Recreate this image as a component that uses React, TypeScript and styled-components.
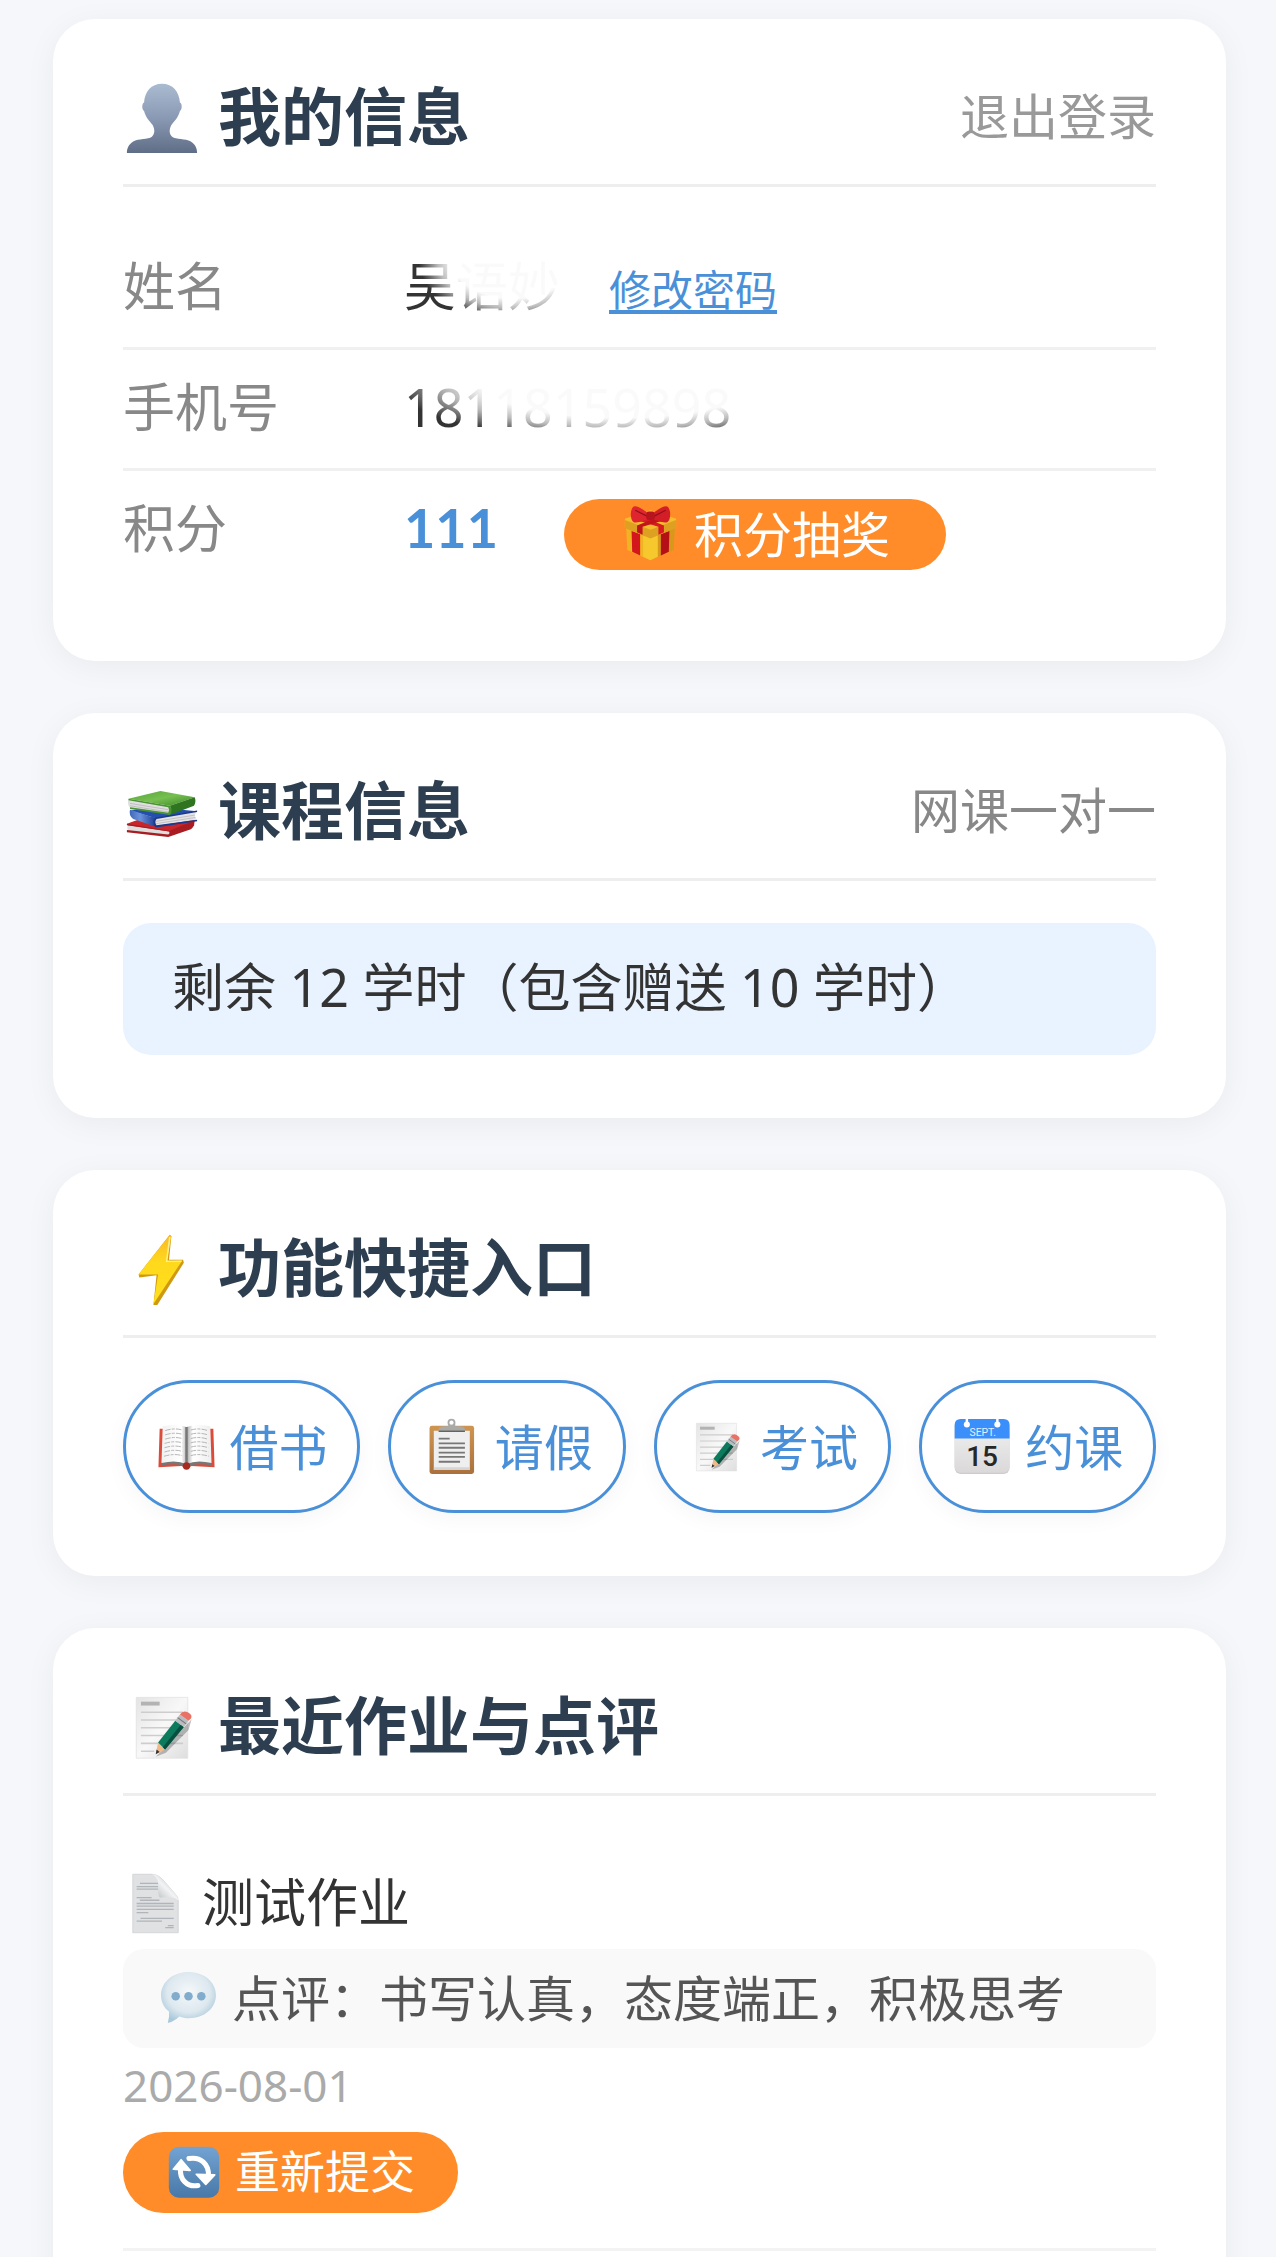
import { ReactNode } from "react";
import styled, { createGlobalStyle } from "styled-components";

const GlobalStyle = createGlobalStyle`
  * {
    box-sizing: border-box;
  }
  body {
    margin: 0;
    background: #f5f7fb;
    color: #333;
    font-family: "Noto Sans", "Noto Sans CJK SC", sans-serif;
    font-size: 52px;
  }
  h2, h3, p, dl, dt, dd, ul {
    margin: 0;
    padding: 0;
    font-weight: normal;
  }
  button {
    font-family: inherit;
    cursor: pointer;
  }
`;

const Page = styled.main`
  display: flex;
  flex-direction: column;
  gap: 52px;
  padding: 19px 50px 52px 53px;
`;

const Card = styled.section`
  padding: 60px 70px 63px;
  background: white;
  border-radius: 42px;
  box-shadow: 0 6px 32px rgba(0, 0, 0, 0.05);
`;

const CardHeader = styled.header`
  display: flex;
  justify-content: space-between;
  align-items: center;
  height: 108px;
  padding-bottom: 32px;
  margin-bottom: 42px;
  border-bottom: 3px solid #eee;
`;

const CardTitle = styled.h2`
  display: flex;
  align-items: center;
  gap: 17px;
  color: #2c3e50;
  font-size: 63px;
  font-weight: bold;
  line-height: 72px;
  svg {
    margin-top: 5px;
  }
`;

const LogoutButton = styled.button`
  padding: 0;
  border: none;
  background: none;
  color: #999;
  font-size: 49px;
  line-height: 72px;
`;

const CourseType = styled.span`
  color: #888;
  font-size: 49px;
  line-height: 72px;
`;

const InfoRow = styled.div`
  display: flex;
  align-items: baseline;
  height: 121px;
  padding-top: 21px;
  line-height: 72px;
  border-bottom: 3px solid #f0f0f0;
  &:last-child {
    height: 127px;
    border-bottom: none;
  }
`;

const InfoLabel = styled.dt`
  width: 281px;
  color: #888;
`;

const InfoValue = styled.dd`
  display: flex;
  align-items: baseline;
`;

const FadedText = styled.span<{ $fade: string }>`
  color: transparent;
  background: ${(props) => props.$fade};
  background-clip: text;
  -webkit-background-clip: text;
`;

const PasswordLink = styled.a`
  margin-left: 49px;
  color: #4a90d9;
  font-size: 42px;
  line-height: 48px;
  text-decoration: underline;
  text-decoration-thickness: 4px;
  text-underline-offset: 4px;
  text-decoration-skip-ink: none;
`;

const Points = styled.strong`
  color: #4a90d9;
  font-family: Lato, sans-serif;
  font-size: 54px;
`;

const OrangeButton = styled.button<{ $size: "flat" | "tall" }>`
  display: flex;
  align-items: center;
  align-self: flex-start;
  gap: 13px;
  height: ${(props) => (props.$size === "flat" ? 71 : 81)}px;
  margin: ${(props) => (props.$size === "flat" ? "7px 0 0 66px" : "0")};
  padding: 0 ${(props) => (props.$size === "flat" ? 56 : 43)}px 2px;
  border: none;
  border-radius: 42px;
  background: #ff8c28;
  color: white;
  font-size: ${(props) => (props.$size === "flat" ? 49 : 45)}px;
  line-height: 68px;
`;

const HoursBox = styled.p`
  padding: 28px 49px 32px;
  border-radius: 28px;
  background: #e8f3ff;
  line-height: 72px;
`;

const QuickGrid = styled.nav`
  display: grid;
  grid-template-columns: repeat(4, 1fr);
  gap: 28px;
`;

const QuickButton = styled.button`
  display: flex;
  justify-content: center;
  align-items: center;
  gap: 13px;
  height: 133px;
  padding: 0;
  border: 3px solid #4a90d9;
  border-radius: 70px;
  background: white;
  box-shadow: 0 6px 22px rgba(0, 0, 0, 0.04);
  color: #4a90d9;
  font-size: 49px;
  line-height: 72px;
  white-space: nowrap;
`;

const HomeworkItem = styled.li`
  display: flex;
  flex-direction: column;
  align-items: flex-start;
  padding: 28px 0 35px;
  border-bottom: 3px solid #f3f3f3;
`;

const HomeworkTitle = styled.h3`
  display: flex;
  align-items: center;
  gap: 14px;
  padding-bottom: 11px;
  font-size: 52px;
  line-height: 72px;
  svg {
    margin-top: 3px;
  }
`;

const Comment = styled.p`
  display: flex;
  align-items: center;
  gap: 13px;
  align-self: stretch;
  height: 99px;
  padding: 0 35px 2px;
  border-radius: 21px;
  background: #f9f9f9;
  color: #555;
  font-size: 49px;
  line-height: 72px;
`;

const HomeworkDate = styled.time`
  margin: 6px 0 15px;
  color: #aaa;
  font-size: 44px;
  line-height: 63px;
`;

const Svg = styled.svg`
  display: block;
  flex-shrink: 0;
`;

interface IIcon {
  size: number;
}

function Icon({ size, children }: IIcon & { children: ReactNode }) {
  return (
    <Svg width={size} height={size} viewBox="0 0 100 100" aria-hidden="true">
      {children}
    </Svg>
  );
}

function PersonIcon({ size }: IIcon) {
  return (
    <Icon size={size}>
      <defs>
        <linearGradient id="person" x1="0" y1="0" x2="0" y2="1">
          <stop offset="0" stopColor="#a9bbd1" />
          <stop offset="0.5" stopColor="#8a99b3" />
          <stop offset="1" stopColor="#5f6d86" />
        </linearGradient>
      </defs>
      <path
        d="M50 6C36 6 28 16 27 30C24 31 24 39 27 41C29 49 34 54 38 59C41 65 41 70 37 74C32 78 20 76 13 80C7 84 5 89 5 95H95C95 89 93 84 87 80C80 76 68 78 63 74C59 70 59 65 62 59C66 54 71 49 73 41C76 39 76 31 73 30C72 16 64 6 50 6Z"
        fill="url(#person)"
      />
    </Icon>
  );
}

function BooksIcon({ size }: IIcon) {
  return (
    <Icon size={size}>
      <defs>
        <linearGradient id="greenBook" x1="0" y1="0" x2="1" y2="1">
          <stop offset="0" stopColor="#58a53a" />
          <stop offset="0.5" stopColor="#76bf50" />
          <stop offset="1" stopColor="#3a8626" />
        </linearGradient>
        <linearGradient id="blueBook" x1="0" y1="0" x2="1" y2="0">
          <stop offset="0" stopColor="#4067b8" />
          <stop offset="0.4" stopColor="#6b93dc" />
          <stop offset="1" stopColor="#1c3c94" />
        </linearGradient>
      </defs>
      <path d="M5 65L30 56L92 60L91 68L60 78L8 70Z" fill="#c8262b" />
      <path d="M7 67L60 75L59 81L7 74Q4 70 7 67Z" fill="#dedede" />
      <path d="M5 65L60 74L91 61Q92 69 87 72L58 82L5 76L5 73L58 79Q61 77 59 75L5 67Z" fill="#a81c22" />
      <path d="M9 48L42 44L95 49L42 58Z" fill="#244fae" />
      <path d="M9 47L42 58Q39 63 42 69L13 59Q7 54 9 47Z" fill="url(#blueBook)" />
      <path d="M42 58L94 49Q91 55 94 60L42 68Q38 63 42 58Z" fill="#e4e4e6" />
      <path d="M42 62L92 54M42 65L93 57" stroke="#b8b8bc" strokeWidth="1" />
      <path d="M42 57L95 48V50L43 59Q40 63 43 67L95 60V62L42 70Q36 63 42 57Z" fill="#1b398c" />
      <path d="M7 34L60 43L59 53L9 45Q5 39 7 34Z" fill="#dfdfdf" />
      <path d="M9 39L58 47M9 42L58 50" stroke="#b5b5b5" strokeWidth="1" />
      <path d="M7 33L48 23L92 31L60 42Z" fill="url(#greenBook)" />
      <path d="M60 42L92 31Q94 37 91 42L60 54Q64 48 60 42Z" fill="#2f741e" />
      <path d="M7 33L60 42Q65 48 60 54L9 46V44L58 51Q60 47 58 44L7 35Z" fill="#4b9432" />
    </Icon>
  );
}

function BoltIcon({ size }: IIcon) {
  return (
    <Icon size={size}>
      <defs>
        <linearGradient id="bolt" x1="0" y1="0" x2="0" y2="1">
          <stop offset="0" stopColor="#fbb829" />
          <stop offset="0.4" stopColor="#ffd91c" />
          <stop offset="1" stopColor="#ffe01c" />
        </linearGradient>
      </defs>
      <path d="M60 6L62 8L59 38H77L78 42L44 96H39L43 58L21 61L20 57Z" fill="#cf9a12" />
      <path d="M60 6L20 57H45L39 95L76 39L56 40L62 8Z" fill="url(#bolt)" />
      <path d="M60 9L56 40H75" fill="none" stroke="#fff08a" strokeWidth="2" />
    </Icon>
  );
}

function MemoIcon({ size }: IIcon) {
  return (
    <Icon size={size}>
      <defs>
        <linearGradient id="memo" x1="0" y1="0" x2="1" y2="1">
          <stop offset="0" stopColor="#e4e4e4" />
          <stop offset="0.5" stopColor="#f8f8f8" />
          <stop offset="1" stopColor="#dedede" />
        </linearGradient>
      </defs>
      <path d="M17 12H83V90H17Z" fill="url(#memo)" stroke="#e2e2e2" />
      <path d="M23 20H47" stroke="#b3b3b3" strokeWidth="5" />
      <path d="M23 31H77M23 41H77M23 51H77M23 61H77M23 71H77M23 81H40" stroke="#cdcdcd" strokeWidth="2" />
      <path d="M42 88L50 80L88 40L84 54L55 83Z" fill="#000" opacity="0.25" />
      <path d="M42 85L45 70L54 79Z" fill="#f0b98a" />
      <path d="M42 85L43 79L47 82Z" fill="#333" />
      <path d="M45 70L67 42L78 50L54 79Z" fill="#0c7a5c" />
      <path d="M51 76L74 47L78 50L54 79Z" fill="#07503f" />
      <path d="M67 42L73 34L84 42L78 50Z" fill="#b9bcc0" />
      <path d="M70 38L81 46" stroke="#777" strokeWidth="1.5" />
      <path d="M73 34Q77 28 83 31Q90 35 87 39L84 42Z" fill="#ea7265" />
    </Icon>
  );
}

function OpenBookIcon({ size }: IIcon) {
  return (
    <Icon size={size}>
      <defs>
        <linearGradient id="pageLeft" x1="0" y1="0" x2="1" y2="0">
          <stop offset="0" stopColor="#f1f1f1" />
          <stop offset="0.8" stopColor="#fff" />
          <stop offset="1" stopColor="#b5b5b5" />
        </linearGradient>
        <linearGradient id="pageRight" x1="0" y1="0" x2="1" y2="0">
          <stop offset="0" stopColor="#a5a5a5" />
          <stop offset="0.25" stopColor="#fff" />
          <stop offset="1" stopColor="#eee" />
        </linearGradient>
      </defs>
      <path d="M6 21H94L96 84L58 82Q50 90 42 82L4 84Z" fill="#dc4a3a" />
      <path d="M9 76Q34 70 50 78Q66 70 91 76V81Q64 76 50 84Q36 76 9 81Z" fill="#777" />
      <path d="M11 17Q34 12 50 18V79Q34 71 9 77Z" fill="url(#pageLeft)" />
      <path d="M50 18Q66 12 89 17L91 77Q66 71 50 79Z" fill="url(#pageRight)" />
      <path d="M50 18V80" stroke="#777" strokeWidth="4" />
      <path
        d="M15 24Q30 19 43 23M15 31Q30 26 43 30M15 38Q30 33 43 37M14 45Q30 40 43 44M14 52Q30 47 43 51M14 59Q30 54 43 58M13 66Q30 61 43 65M57 23Q70 19 85 24M57 30Q70 26 85 31M57 37Q70 33 85 38M57 44Q70 40 86 45M57 51Q70 47 86 52M57 58Q70 54 86 59M57 65Q70 61 87 66"
        fill="none"
        stroke="#b4b4b4"
        strokeWidth="1.6"
        strokeDasharray="9 2 5 2"
      />
      <circle cx="50" cy="82" r="6" fill="#a52a22" />
    </Icon>
  );
}

function ClipboardIcon({ size }: IIcon) {
  return (
    <Icon size={size}>
      <defs>
        <linearGradient id="board" x1="0" y1="0" x2="0" y2="1">
          <stop offset="0" stopColor="#cf9550" />
          <stop offset="1" stopColor="#aa713d" />
        </linearGradient>
      </defs>
      <rect x="14" y="16" width="73" height="79" rx="4" fill="url(#board)" />
      <path d="M21 24H80V88H21Z" fill="#efefef" />
      <path d="M21 84H80V88H21Z" fill="#d5d5d5" />
      <path d="M29 22Q29 17 38 17H45V13H56V17H63Q72 17 72 22V26H29Z" fill="#a9aaa5" />
      <path d="M29 25H72" stroke="#555" strokeWidth="2" />
      <circle cx="50" cy="11" r="5" fill="white" stroke="#aaa" strokeWidth="3" />
      <path d="M29 37H47M29 45H72M29 52H72M29 60H72M29 67H72M29 75H64" stroke="#777" strokeWidth="3" />
    </Icon>
  );
}

function CalendarIcon({ size }: IIcon) {
  return (
    <Icon size={size}>
      <defs>
        <linearGradient id="calendar" x1="0" y1="0" x2="0" y2="1">
          <stop offset="0" stopColor="#f4f4f4" />
          <stop offset="1" stopColor="#dad8d8" />
        </linearGradient>
      </defs>
      <rect x="6" y="6" width="90" height="89" rx="10" fill="#cfcccb" />
      <rect x="6" y="5" width="90" height="88" rx="10" fill="url(#calendar)" />
      <path d="M6 37V15Q6 5 16 5H86Q96 5 96 15V37Z" fill="#3a8ffb" />
      <path d="M26 5V13M76 5V13" stroke="white" strokeWidth="4" />
      <circle cx="26" cy="14" r="5" fill="white" />
      <circle cx="76" cy="14" r="5" fill="white" />
      <text x="52" y="32" textAnchor="middle" fontFamily="Roboto, sans-serif" fontSize="17" fill="#e4efff">
        SEPT.
      </text>
      <text x="51" y="82" textAnchor="middle" fontFamily="Roboto, sans-serif" fontWeight="500" fontSize="46" fill="#292725">
        15
      </text>
    </Icon>
  );
}

function PageIcon({ size }: IIcon) {
  return (
    <Icon size={size}>
      <defs>
        <linearGradient id="curl" x1="0" y1="1" x2="1" y2="0">
          <stop offset="0" stopColor="#aeb2b5" />
          <stop offset="0.5" stopColor="#f2f3f4" />
          <stop offset="1" stopColor="#a5a8ab" />
        </linearGradient>
      </defs>
      <path d="M15 5H45Q53 5 60 12L80 35Q85 40 85 46V95H15Z" fill="#dfe1e3" stroke="#c9cbcd" />
      <path
        d="M26 19H54M21 24H54M21 28H54M21 41H44M26 45H56M21 50H78M21 54H78M21 59H78M21 64H39M27 73H78M21 77H60M69 84H78M65 87H78"
        stroke="#b1b5b9"
        strokeWidth="2"
      />
      <path d="M45 5Q56 10 54 28Q54 39 57 41Q76 38 85 45Q84 38 77 31L59 11Q53 5 45 5Z" fill="url(#curl)" />
    </Icon>
  );
}

function BubbleIcon({ size }: IIcon) {
  return (
    <Icon size={size}>
      <defs>
        <radialGradient id="bubble" cx="0.5" cy="0.4" r="0.6">
          <stop offset="0" stopColor="#f5f8fa" />
          <stop offset="0.65" stopColor="#dde8ef" />
          <stop offset="1" stopColor="#a9c9db" />
        </radialGradient>
      </defs>
      <path d="M50 8C25 8 5 24 5 46C5 58 10 67 18 73Q19 82 16 92Q28 88 35 81C40 83 45 84 50 84C76 84 95 68 95 46C95 24 75 8 50 8Z" fill="url(#bubble)" />
      <circle cx="29" cy="48" r="7" fill="#82accb" />
      <circle cx="50" cy="48" r="7" fill="#82accb" />
      <circle cx="71" cy="48" r="7" fill="#82accb" />
    </Icon>
  );
}

function RefreshIcon({ size }: IIcon) {
  return (
    <Icon size={size}>
      <defs>
        <linearGradient id="refresh" x1="0" y1="0" x2="0" y2="1">
          <stop offset="0" stopColor="#72a3d2" />
          <stop offset="1" stopColor="#4878a8" />
        </linearGradient>
      </defs>
      <rect x="5" y="5" width="90" height="91" rx="18" fill="url(#refresh)" />
      <path d="M41 26C62 22 76 36 76 56" fill="none" stroke="white" strokeWidth="9" strokeLinecap="round" />
      <path d="M57 74C38 78 24 63 26 44" fill="none" stroke="white" strokeWidth="9" strokeLinecap="round" />
      <path d="M54 54L87 55L71 72Z" fill="white" stroke="white" strokeWidth="3" strokeLinejoin="round" />
      <path d="M13 45L43 47L27 28Z" fill="white" stroke="white" strokeWidth="3" strokeLinejoin="round" />
    </Icon>
  );
}

function GiftIcon({ size }: IIcon) {
  return (
    <Icon size={size}>
      <path d="M10 37L50 49V94L12 77Z" fill="#f0b323" />
      <path d="M90 37L50 49V94L88 77Z" fill="#d8981b" />
      <path d="M19 46L33 51V86L20 80Z" fill="#d3171c" />
      <path d="M81 46L67 51V86L80 80Z" fill="#b41016" />
      <path d="M38 53L50 48L62 53V88L50 94L38 88Z" fill="#f7c72e" />
      <path d="M8 26L50 12L92 26V40L50 57L8 40Z" fill="#f5bd2d" />
      <path d="M8 28L50 44L92 28V41L50 58L8 41Z" fill="#dda021" />
      <path d="M20 26L32 21L72 37V48L63 52V39Z" fill="#d71b20" />
      <path d="M80 26L68 21L28 37V48L37 52V39Z" fill="#c1151a" />
      <path d="M50 21C39 10 25 2 21 7C16 14 17 27 22 31C27 34 40 29 50 25Z" fill="#df252d" />
      <path d="M50 21C61 10 75 2 79 7C84 14 83 27 78 31C73 34 60 29 50 25Z" fill="#d41e27" />
      <path d="M25 12Q35 17 45 22M75 12Q65 17 55 22" stroke="#94101a" strokeWidth="2" fill="none" />
      <rect x="43" y="14" width="14" height="14" rx="4" fill="#b8141f" />
    </Icon>
  );
}

const nameFade =
  "radial-gradient(ellipse 55% 75% at 70% 15%, #fafafa 70%, #bbb 88%, #333 110%)";
const phoneFade =
  "radial-gradient(ellipse 64% 76% at 66% 15%, #fafafa 66%, #bbb 84%, #333 108%)";

const quickLinks = [
  { label: "借书", Glyph: OpenBookIcon },
  { label: "请假", Glyph: ClipboardIcon },
  { label: "考试", Glyph: MemoIcon },
  { label: "约课", Glyph: CalendarIcon },
];

function App() {
  return (
    <>
      <GlobalStyle />
      <Page>
        <Card>
          <CardHeader>
            <CardTitle>
              <PersonIcon size={78} />
              我的信息
            </CardTitle>
            <LogoutButton>退出登录</LogoutButton>
          </CardHeader>
          <dl>
            <InfoRow>
              <InfoLabel>姓名</InfoLabel>
              <InfoValue>
                <FadedText $fade={nameFade}>吴语妙</FadedText>
                <PasswordLink href="#password">修改密码</PasswordLink>
              </InfoValue>
            </InfoRow>
            <InfoRow>
              <InfoLabel>手机号</InfoLabel>
              <InfoValue>
                <FadedText $fade={phoneFade}>18118159898</FadedText>
              </InfoValue>
            </InfoRow>
            <InfoRow>
              <InfoLabel>积分</InfoLabel>
              <InfoValue>
                <Points>111</Points>
                <OrangeButton $size="flat">
                  <GiftIcon size={61} />
                  积分抽奖
                </OrangeButton>
              </InfoValue>
            </InfoRow>
          </dl>
        </Card>

        <Card>
          <CardHeader>
            <CardTitle>
              <BooksIcon size={78} />
              课程信息
            </CardTitle>
            <CourseType>网课一对一</CourseType>
          </CardHeader>
          <HoursBox>剩余 12 学时（包含赠送 10 学时）</HoursBox>
        </Card>

        <Card>
          <CardHeader>
            <CardTitle>
              <BoltIcon size={78} />
              功能快捷入口
            </CardTitle>
          </CardHeader>
          <QuickGrid>
            {quickLinks.map(({ label, Glyph }) => (
              <QuickButton key={label}>
                <Glyph size={61} />
                {label}
              </QuickButton>
            ))}
          </QuickGrid>
        </Card>

        <Card>
          <CardHeader>
            <CardTitle>
              <MemoIcon size={78} />
              最近作业与点评
            </CardTitle>
          </CardHeader>
          <ul>
            <HomeworkItem>
              <HomeworkTitle>
                <PageIcon size={65} />
                测试作业
              </HomeworkTitle>
              <Comment>
                <BubbleIcon size={61} />
                点评：书写认真，态度端正，积极思考
              </Comment>
              <HomeworkDate dateTime="2026-08-01">2026-08-01</HomeworkDate>
              <OrangeButton $size="tall">
                <RefreshIcon size={56} />
                重新提交
              </OrangeButton>
            </HomeworkItem>
          </ul>
        </Card>
      </Page>
    </>
  );
}

export default App;
